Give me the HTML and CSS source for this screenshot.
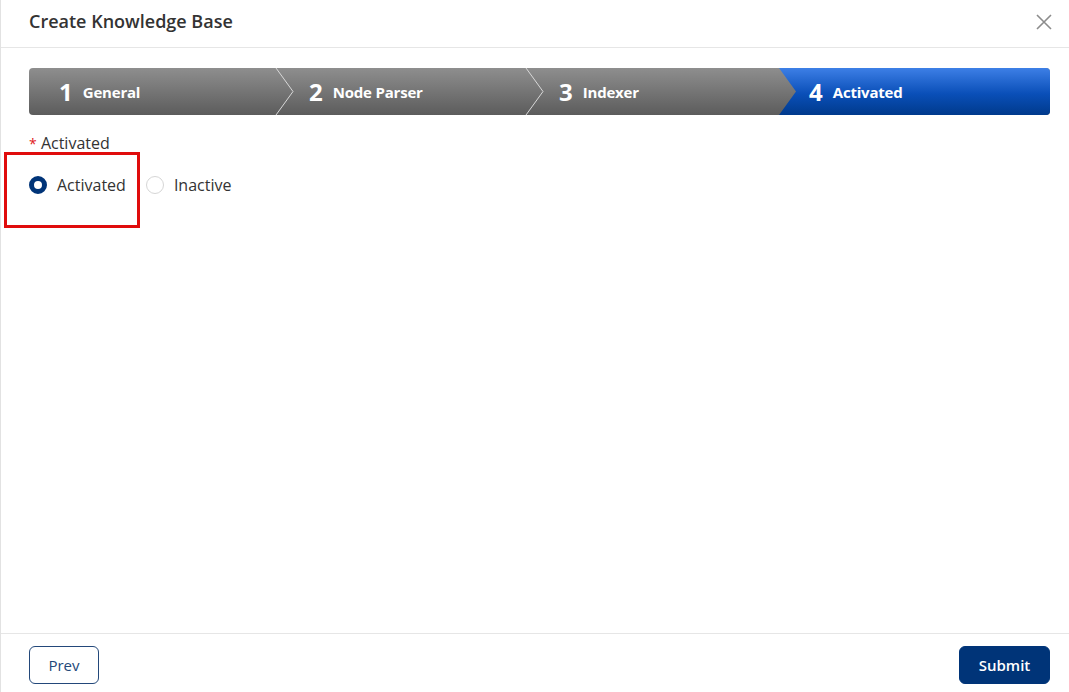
FILE: index.html
```html
<!DOCTYPE html>
<html>
<head>
<meta charset="utf-8">
<link rel="stylesheet" href="styles.css">
</head>
<body>
<div class="modal">
  <div class="header">
    <div class="title">Create Knowledge Base</div>
    <svg class="close" width="18" height="18" viewBox="0 0 18 18"><path d="M2 2 L16 16 M16 2 L2 16" stroke="#8c8c8c" stroke-width="1.6" fill="none"/></svg>
  </div>
  <div class="body">
    <div class="steps">
      <div class="step"><span class="num">1</span><span class="lbl">General</span>
        <svg class="chev" width="22" height="47" viewBox="0 0 22 47"><path d="M1 0 L18 23.5 L1 47" stroke="#d8d8d8" stroke-width="1" fill="none"/></svg></div>
      <div class="step"><span class="num">2</span><span class="lbl">Node Parser</span>
        <svg class="chev" width="22" height="47" viewBox="0 0 22 47"><path d="M1 0 L18 23.5 L1 47" stroke="#d8d8d8" stroke-width="1" fill="none"/></svg></div>
      <div class="step"><span class="num">3</span><span class="lbl">Indexer</span></div>
      <div class="step active"><span class="num">4</span><span class="lbl">Activated</span></div>
    </div>
    <div class="field">
      <div class="flabel"><span class="req">*</span> Activated</div>
      <div class="radios">
        <label class="radio"><span class="dot on"></span>Activated</label>
        <label class="radio"><span class="dot"></span>Inactive</label>
      </div>
      <div class="highlight"></div>
    </div>
  </div>
  <div class="footer">
    <button class="btn prev">Prev</button>
    <button class="btn submit">Submit</button>
  </div>
</div>
</body>
</html>
```
FILE: styles.css
```css
* { box-sizing: border-box; }
html, body { margin: 0; padding: 0; background: #fff; }
body { font-family: "Open Sans", "Noto Sans", "Liberation Sans", sans-serif; color: #333; }
.modal {
  width: 1069px; height: 692px;
  display: flex; flex-direction: column;
  border-left: 1px solid #e2e2e2;
}
.header {
  height: 48px; flex: none;
  display: flex; align-items: center; justify-content: space-between;
  padding: 0 16px 0 28px;
  border-bottom: 1px solid #e6e6e6;
}
.title { font-size: 18px; font-weight: 600; color: #333; margin-top: -5px; }
.close { margin-top: -4px; }
.body { flex: 1; padding: 20px 19px 0 28px; }
.steps {
  display: flex; height: 47px; border-radius: 4px; overflow: hidden;
  background: linear-gradient(#8e8e8e, #5c5c5c);
}
.step {
  position: relative; width: 250px; flex: none;
  display: flex; align-items: center; padding-left: 30px;
  color: #fff; font-weight: 700;
}
.step.active {
  flex: 1; width: auto; padding-left: 30px;
  background: linear-gradient(#3d7fe6, #0a4fb8 55%, #003a8c);
  clip-path: polygon(0 0, 100% 0, 100% 100%, 0 100%, 17px 50%);
}
.chev { position: absolute; right: -18px; top: 0; z-index: 2; }
.num { font-size: 24px; line-height: 1; margin-right: 10px; font-weight: 700; margin-top: 1px; }
.lbl { font-size: 15px; font-weight: 700; letter-spacing: -0.2px; }
.field { position: relative; margin-top: 18px; }
.flabel { font-size: 16px; color: #333; height: 20px; line-height: 20px; }
.req { color: #e02020; font-size: 14px; }
.radios { display: flex; gap: 20px; margin-top: 20px; }
.radio { display: flex; align-items: center; font-size: 16px; color: #333; height: 24px; }
.dot {
  flex: none;
  width: 18px; height: 18px; border-radius: 50%;
  border: 1px solid #d6d6d6; margin-right: 10px; background: #fff;
}
.dot.on { border: 5px solid #003478; }
.highlight {
  position: absolute; left: -25px; top: 19px; width: 136px; height: 76px;
  border: 3px solid #e00c0c;
}
.footer {
  height: 59px; flex: none;
  border-top: 1px solid #e6e6e6;
  display: flex; align-items: center; justify-content: space-between;
  padding: 4px 19px 0 28px;
}
.btn { font-family: inherit; font-size: 15px; border-radius: 6px; height: 38px; cursor: pointer; }
.prev { width: 70px; background: #fff; border: 1px solid #23487a; color: #23487a; }
.submit { width: 91px; background: #003478; border: 1px solid #003478; color: #fff; font-weight: 600; }
```
